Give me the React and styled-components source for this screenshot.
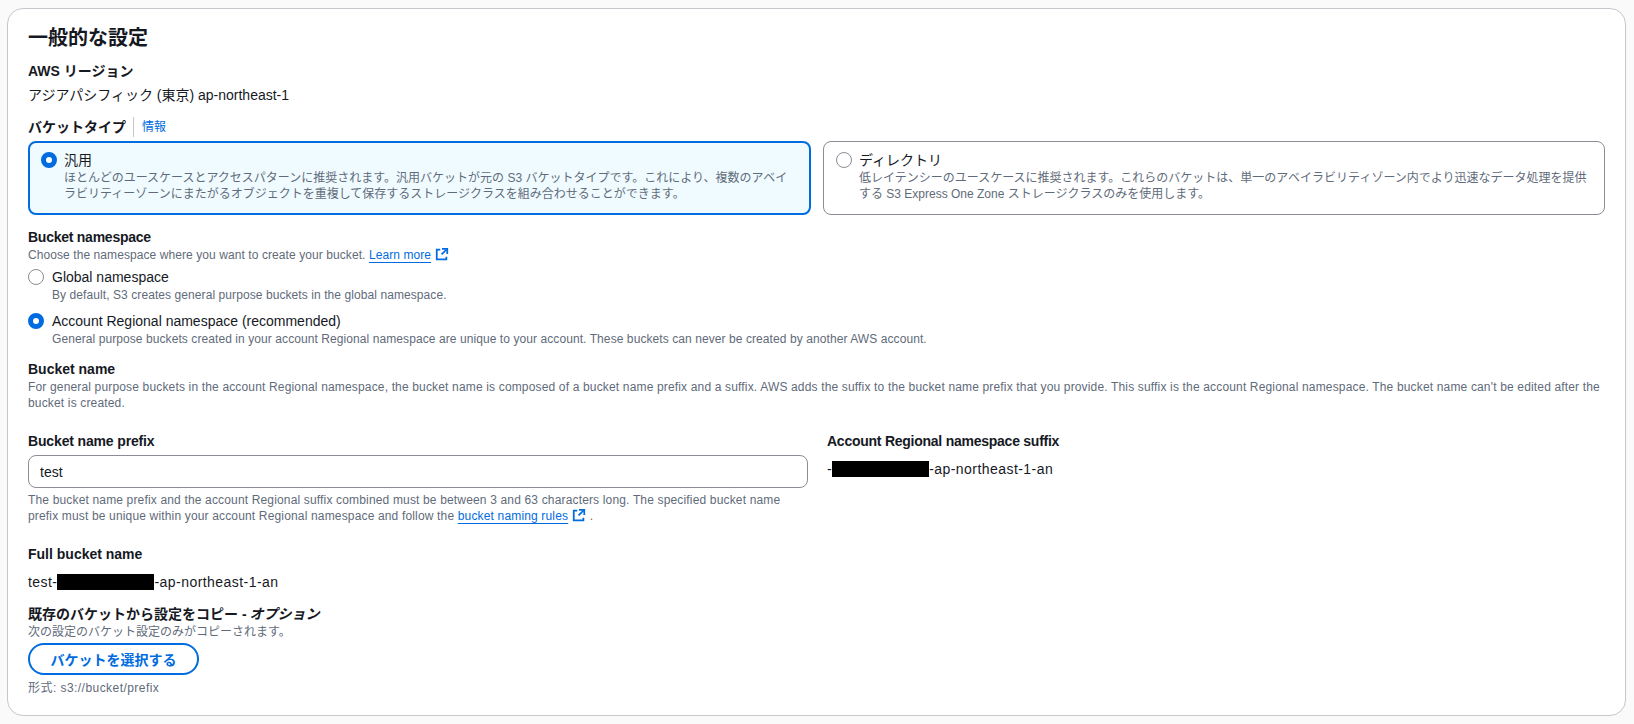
import React from "react";
import styled, { createGlobalStyle } from "styled-components";

const GlobalStyle = createGlobalStyle`
    html, body {
        margin: 0;
        padding: 0;
        background: #fafafa;
        font-family: "Liberation Sans", "Noto Sans CJK JP", sans-serif;
        color: #16191f;
    }
    * { box-sizing: border-box; }
`

const Page = styled.div`
    width: 1634px;
    height: 724px;
    padding: 8px 8px 8px 7px;
`

const Panel = styled.section`
    height: 708px;
    background: #fff;
    border: 1px solid #c6c6cd;
    border-radius: 16px;
    padding: 17px 20px 0 20px;
`

const Title = styled.h2`
    margin: 0 0 11px;
    font-size: 20px;
    line-height: 24px;
    font-weight: 700;
`

const Label = styled.div`
    display: flex;
    align-items: center;
    font-size: 14px;
    line-height: 20px;
    font-weight: 700;
    letter-spacing: ${p => p.$spacing || 0}px;
    margin-top: ${p => p.$top || 0}px;
`

const Value = styled.div`
    font-size: 14px;
    line-height: 20px;
    letter-spacing: ${p => p.$spacing || 0}px;
    margin-top: ${p => p.$top || 0}px;
`

const Hint = styled.div`
    font-size: 12px;
    line-height: 16px;
    color: #5f6b7a;
    letter-spacing: ${p => p.$spacing ?? 0.08}px;
    margin-top: ${p => p.$top || 0}px;
`

const PrefixHint = styled(Hint)`
    max-width: 770px;
`

const InfoLink = styled.a`
    margin-left: 7px;
    padding-left: 8px;
    border-left: 1px solid #c6c6cd;
    font-size: 12px;
    line-height: 20px;
    font-weight: 400;
    color: #006ce0;
`

const CardRow = styled.div`
    display: grid;
    grid-template-columns: 783px 782px;
    gap: 12px;
    margin-top: 4px;
`

const Card = styled.div`
    height: 74px;
    display: flex;
    gap: 7px;
    padding: ${p => (p.$selected ? "7px 11px" : "8px 12px")};
    border-radius: 8px;
    border: ${p => (p.$selected ? "2px solid #006ce0" : "1px solid #8c8c94")};
    background: ${p => (p.$selected ? "#f0fbff" : "#fff")};
`

const RadioRow = styled.div`
    display: flex;
    gap: 8px;
    margin-top: ${p => p.$top || 0}px;
`

const Radio = styled.span`
    flex: none;
    width: 16px;
    height: 16px;
    margin-top: 2px;
    border-radius: 50%;
    background: #fff;
    border: ${p => (p.$checked ? "5px solid #006ce0" : "1px solid #8c8c94")};
`

const ExternalSvg = styled.svg`
    width: 14px;
    height: 14px;
    margin-left: 4px;
    vertical-align: -2px;
    fill: none;
    stroke: #006ce0;
    stroke-width: 2;
`

const DocLink = styled.a`
    color: #006ce0;
    text-decoration: underline;
    text-underline-offset: 3px;
`

const PrefixGrid = styled.div`
    display: grid;
    grid-template-columns: 780px 1fr;
    gap: 19px;
    margin-top: 20px;
`

const Input = styled.div`
    height: 33px;
    margin-top: 4px;
    padding: 0 11px;
    display: flex;
    align-items: center;
    font-size: 14px;
    background: #fff;
    border: 1px solid #8c8c94;
    border-radius: 8px;
`

const Redacted = styled.span`
    display: inline-block;
    width: ${p => p.$width}px;
    height: 16px;
    background: #000;
    vertical-align: -3px;
`

const OptionTag = styled.em`
    margin-left: 3px;
`

const SelectButton = styled.button`
    display: block;
    width: 171px;
    height: 32px;
    margin-top: 3px;
    background: #fff;
    border: 2px solid #006ce0;
    border-radius: 20px;
    color: #006ce0;
    font-family: inherit;
    font-size: 14px;
    font-weight: 700;
`

function External() {
    return (
        <ExternalSvg viewBox="0 0 16 16" aria-hidden="true">
            <path d="M14 8V2H8" />
            <path d="M14 2L7.5 8.5" />
            <path d="M6 3H2v11h11v-3" />
        </ExternalSvg>
    );
}

function App() {
    return (
        <Page>
            <GlobalStyle />
            <Panel>
                <Title>一般的な設定</Title>
                <Label>AWS リージョン</Label>
                <Value $top={4}>アジアパシフィック (東京) ap-northeast-1</Value>
                <Label $top={12}>
                    バケットタイプ
                    <InfoLink>情報</InfoLink>
                </Label>
                <CardRow>
                    <Card $selected>
                        <Radio $checked />
                        <div>
                            <Value>汎用</Value>
                            <Hint $spacing={0}>
                                ほとんどのユースケースとアクセスパターンに推奨されます。汎用バケットが元の S3 バケットタイプです。これにより、複数のアベイラビリティーゾーンにまたがるオブジェクトを重複して保存するストレージクラスを組み合わせることができます。
                            </Hint>
                        </div>
                    </Card>
                    <Card>
                        <Radio />
                        <div>
                            <Value>ディレクトリ</Value>
                            <Hint $spacing={0}>
                                低レイテンシーのユースケースに推奨されます。これらのバケットは、単一のアベイラビリティゾーン内でより迅速なデータ処理を提供する S3 Express One Zone ストレージクラスのみを使用します。
                            </Hint>
                        </div>
                    </Card>
                </CardRow>

                <Label $top={12} $spacing={-0.25}>Bucket namespace</Label>
                <Hint>
                    Choose the namespace where you want to create your bucket. <DocLink>Learn more</DocLink>
                    <External />
                </Hint>
                <RadioRow $top={4}>
                    <Radio />
                    <div>
                        <Value>Global namespace</Value>
                        <Hint>By default, S3 creates general purpose buckets in the global namespace.</Hint>
                    </div>
                </RadioRow>
                <RadioRow $top={8}>
                    <Radio $checked />
                    <div>
                        <Value>Account Regional namespace (recommended)</Value>
                        <Hint>General purpose buckets created in your account Regional namespace are unique to your account. These buckets can never be created by another AWS account.</Hint>
                    </div>
                </RadioRow>

                <Label $top={12}>Bucket name</Label>
                <Hint $spacing={0.16}>
                    For general purpose buckets in the account Regional namespace, the bucket name is composed of a bucket name prefix and a suffix. AWS adds the suffix to the bucket name prefix that you provide. This suffix is the account Regional namespace. The bucket name can't be edited after the bucket is created.
                </Hint>

                <PrefixGrid>
                    <div>
                        <Label $spacing={-0.15}>Bucket name prefix</Label>
                        <Input>test</Input>
                        <PrefixHint $top={4} $spacing={0.16}>
                            The bucket name prefix and the account Regional suffix combined must be between 3 and 63 characters long. The specified bucket name prefix must be unique within your account Regional namespace and follow the <DocLink>bucket naming rules</DocLink>
                            <External /> .
                        </PrefixHint>
                    </div>
                    <div>
                        <Label $spacing={-0.25}>Account Regional namespace suffix</Label>
                        <Value $top={8} $spacing={0.45}>-<Redacted $width={97} />-ap-northeast-1-an</Value>
                    </div>
                </PrefixGrid>

                <Label $top={20}>Full bucket name</Label>
                <Value $top={8} $spacing={0.45}>test-<Redacted $width={97} />-ap-northeast-1-an</Value>
                <Label $top={12}>既存のバケットから設定をコピー - <OptionTag>オプション</OptionTag></Label>
                <Hint $spacing={0}>次の設定のバケット設定のみがコピーされます。</Hint>
                <SelectButton>バケットを選択する</SelectButton>
                <Hint $top={5} $spacing={0.45}>形式: s3://bucket/prefix</Hint>
            </Panel>
        </Page>
    );
}

export default App;
